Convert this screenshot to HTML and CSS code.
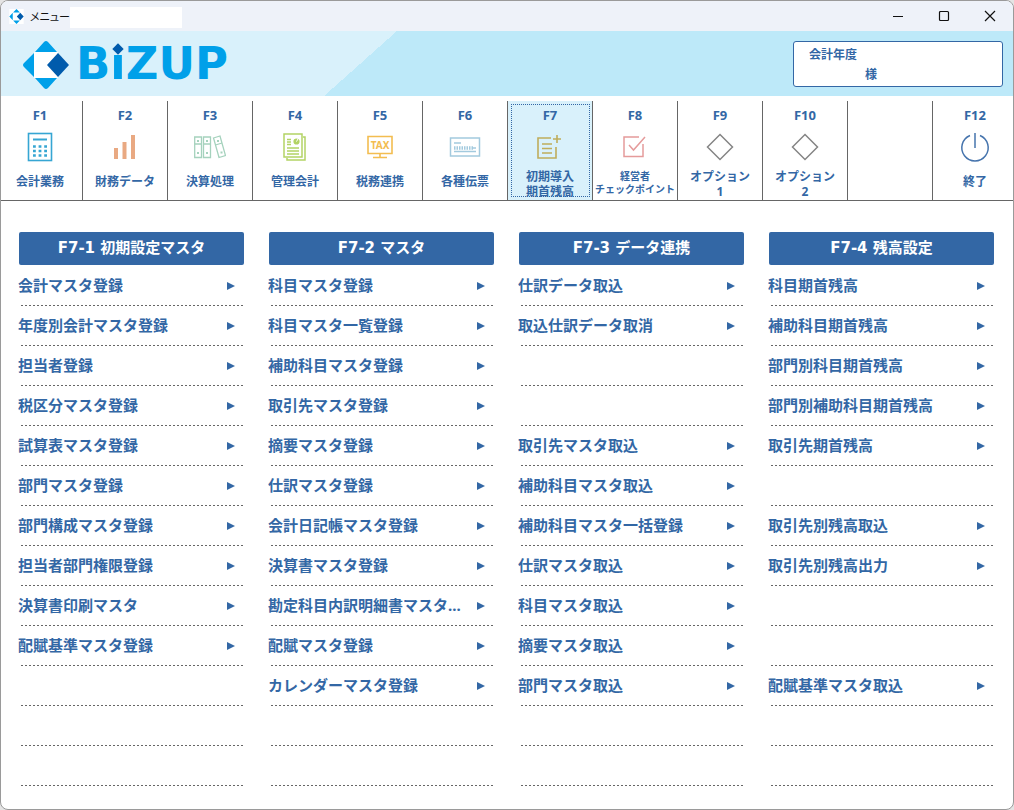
FILE: index.html
```html
<!DOCTYPE html>
<html lang="ja">
<head>
  <meta charset="UTF-8">
  <meta name="viewport" content="width=device-width, initial-scale=1.0">
  <title>メニュー</title>
  <link rel="stylesheet" href="styles.css">
</head>
<body>

<div class="window">
  <div class="titlebar">
    <svg class="title-icon" viewBox="0 0 46 48" aria-hidden="true">
      <rect width="46" height="48" fill="#fff"/>
      <path d="M23 0 34 11H12zM11 12V36L0 24zM12 37H34L23 48z" fill="#00a0e9"/>
      <path d="M35 12 46 24 35 36 24 24z" fill="#005bac"/>
    </svg>
    <span class="title-text">メニュー</span>
    <span class="title-blank"></span>
    <div class="window-buttons">
      <button aria-label="最小化"><svg viewBox="0 0 12 12"><path d="M1 6.5H11"/></svg></button>
      <button aria-label="最大化"><svg viewBox="0 0 12 12"><rect x="1.5" y="1.5" width="9" height="9" rx="1"/></svg></button>
      <button aria-label="閉じる"><svg viewBox="0 0 12 12"><path d="M1 1 11 11M11 1 1 11"/></svg></button>
    </div>
  </div>

  <header class="header">
    <svg class="logo-mark" viewBox="0 0 46 48" aria-hidden="true">
      <path d="M11 11H35V37H11z" fill="#fff"/>
      <path d="M21 1Q23-1 25 1L34 11H12zM11 12V36L1 26Q-1 24 1 22zM12 37H34L25 47Q23 49 21 47z" fill="#00a0e9"/>
      <path d="M35 12 46 24 35 36 24 24z" fill="#005bac"/>
    </svg>
    <div class="logo-text">B<span class="logo-i">i</span>ZUP</div>
    <div class="account">
      <div>会計年度</div>
      <div class="account-name">様</div>
    </div>
  </header>

  <nav class="toolbar">
    <button class="tool">
      <span class="key">F1</span>
      <svg class="icon" viewBox="0 0 32 32" stroke="#36a6d3" stroke-width="1.6">
        <rect x="4.5" y="2.5" width="23" height="27"/>
        <path d="M9 8.5H23" stroke-width="2.2"/>
        <path d="M9 15.5H23M9 20H23M9 24.5H23" stroke-width="2.6" stroke-dasharray="2.800 2.800"/>
      </svg>
      <span class="label">会計業務</span>
    </button>
    <button class="tool">
      <span class="key">F2</span>
      <svg class="icon" viewBox="0 0 32 32" stroke="#e9a982" stroke-width="4">
        <path d="M7 28V17M15.5 28V11M24 28V4"/>
      </svg>
      <span class="label">財務データ</span>
    </button>
    <button class="tool">
      <span class="key">F3</span>
      <svg class="icon" viewBox="0 0 32 32" stroke="#a5d2bd" stroke-width="1.3">
        <path d="M0.700 6H7.500V26.500H0.700zM0.700 13H7.500M9.500 6H16.500V26.500H9.500zM9.500 13H16.500M19.500 7 26 5 31.500 24.500 25 26.500zM21.500 14 28 12"/>
        <path d="M3 10H5M3 22H5M12 10H14M12 22H14M23 10H25M26.500 21.500H28.500" stroke-width="2"/>
      </svg>
      <span class="label">決算処理</span>
    </button>
    <button class="tool">
      <span class="key">F4</span>
      <svg class="icon" viewBox="0 0 32 32" stroke="#b3d364" stroke-width="1.5">
        <path d="M5 3H23V26H5zM24 6H26V29H8V27"/>
        <path d="M8 8.500H12M8 11H12M8 13.500H12M8 17H20M8 20H20M8 23H20"/>
        <circle cx="17.500" cy="10.500" r="1.700" stroke-width="2.800"/>
        <path d="M17.500 10.500 19.500 7" stroke="#fff" stroke-width="1"/>
      </svg>
      <span class="label">管理会計</span>
    </button>
    <button class="tool">
      <span class="key">F5</span>
      <svg class="icon" viewBox="0 0 32 32" stroke="#f3bd50" stroke-width="1.6">
        <path d="M4 5.500H28V22.500H4zM16 23V26M9 26.500H23"/>
        <text x="16" y="18" class="tax">TAX</text>
      </svg>
      <span class="label">税務連携</span>
    </button>
    <button class="tool">
      <span class="key">F6</span>
      <svg class="icon" viewBox="0 0 32 32" stroke="#a3cade" stroke-width="1.5">
        <rect x="1.500" y="7" width="29" height="18"/>
        <path d="M5 12H12M5 20.500H27"/>
        <path d="M5 17H24" stroke-width="3.500" stroke-dasharray="1.500 1"/>
        <path d="M24 17H27"/>
      </svg>
      <span class="label">各種伝票</span>
    </button>
    <button class="tool selected">
      <span class="key">F7</span>
      <svg class="icon" viewBox="0 0 32 32" stroke="#bfad5c" stroke-width="1.6">
        <path d="M17 7H4V27H22V16M23 4V12M19 8H27M8 13H18M8 17.500H18M8 22H18"/>
      </svg>
      <span class="label two-line">初期導入<br>期首残高</span>
    </button>
    <button class="tool">
      <span class="key">F8</span>
      <svg class="icon" viewBox="0 0 32 32" stroke="#e59b9b" stroke-width="1.5">
        <path d="M20 6H5V25.500H24V13M10 14 14.500 19 26 6"/>
      </svg>
      <span class="label small">経営者<br>チェックポイント</span>
    </button>
    <button class="tool">
      <span class="key">F9</span>
      <svg class="icon" viewBox="0 0 32 32" stroke="#858585" stroke-width="1.5">
        <path d="M16 3.500 28.500 16 16 28.500 3.500 16z"/>
      </svg>
      <span class="label two-line">オプション<br>1</span>
    </button>
    <button class="tool">
      <span class="key">F10</span>
      <svg class="icon" viewBox="0 0 32 32" stroke="#858585" stroke-width="1.5">
        <path d="M16 3.500 28.500 16 16 28.500 3.500 16z"/>
      </svg>
      <span class="label two-line">オプション<br>2</span>
    </button>
    <div class="tool"></div>
    <button class="tool">
      <span class="key">F12</span>
      <svg class="icon" viewBox="0 0 32 32" stroke="#4674ad" stroke-width="1.5">
        <path d="M11 4.500A13.200 13.200 0 1 0 21 4.500M16 2V17"/>
      </svg>
      <span class="label">終了</span>
    </button>
  </nav>

  <main class="menu">
    <section>
      <h2>F7-1 初期設定マスタ</h2>
      <ul>
        <li><button><span>会計マスタ登録</span></button></li>
        <li><button><span>年度別会計マスタ登録</span></button></li>
        <li><button><span>担当者登録</span></button></li>
        <li><button><span>税区分マスタ登録</span></button></li>
        <li><button><span>試算表マスタ登録</span></button></li>
        <li><button><span>部門マスタ登録</span></button></li>
        <li><button><span>部門構成マスタ登録</span></button></li>
        <li><button><span>担当者部門権限登録</span></button></li>
        <li><button><span>決算書印刷マスタ</span></button></li>
        <li><button><span>配賦基準マスタ登録</span></button></li>
        <li></li>
        <li></li>
        <li></li>
      </ul>
    </section>

    <section>
      <h2>F7-2 マスタ</h2>
      <ul>
        <li><button><span>科目マスタ登録</span></button></li>
        <li><button><span>科目マスタ一覧登録</span></button></li>
        <li><button><span>補助科目マスタ登録</span></button></li>
        <li><button><span>取引先マスタ登録</span></button></li>
        <li><button><span>摘要マスタ登録</span></button></li>
        <li><button><span>仕訳マスタ登録</span></button></li>
        <li><button><span>会計日記帳マスタ登録</span></button></li>
        <li><button><span>決算書マスタ登録</span></button></li>
        <li><button><span>勘定科目内訳明細書マスタ...</span></button></li>
        <li><button><span>配賦マスタ登録</span></button></li>
        <li><button><span>カレンダーマスタ登録</span></button></li>
        <li></li>
        <li></li>
      </ul>
    </section>

    <section>
      <h2>F7-3 データ連携</h2>
      <ul>
        <li><button><span>仕訳データ取込</span></button></li>
        <li><button><span>取込仕訳データ取消</span></button></li>
        <li></li>
        <li></li>
        <li><button><span>取引先マスタ取込</span></button></li>
        <li><button><span>補助科目マスタ取込</span></button></li>
        <li><button><span>補助科目マスタ一括登録</span></button></li>
        <li><button><span>仕訳マスタ取込</span></button></li>
        <li><button><span>科目マスタ取込</span></button></li>
        <li><button><span>摘要マスタ取込</span></button></li>
        <li><button><span>部門マスタ取込</span></button></li>
        <li></li>
        <li></li>
      </ul>
    </section>

    <section>
      <h2>F7-4 残高設定</h2>
      <ul>
        <li><button><span>科目期首残高</span></button></li>
        <li><button><span>補助科目期首残高</span></button></li>
        <li><button><span>部門別科目期首残高</span></button></li>
        <li><button><span>部門別補助科目期首残高</span></button></li>
        <li><button><span>取引先期首残高</span></button></li>
        <li></li>
        <li><button><span>取引先別残高取込</span></button></li>
        <li><button><span>取引先別残高出力</span></button></li>
        <li></li>
        <li></li>
        <li><button><span>配賦基準マスタ取込</span></button></li>
        <li></li>
        <li></li>
      </ul>
    </section>
  </main>
</div>

</body>
</html>
```
FILE: styles.css
```css
* {
  box-sizing: border-box;
}
body {
  margin: 0;
  background-color: #e4e4e4;
  color: #3367a5;
  font-family: "Noto Sans", "Noto Sans CJK JP", sans-serif;
}
button {
  padding: 0;
  border: none;
  background: none;
  color: inherit;
  font: inherit;
  cursor: pointer;
}
.window {
  min-height: 100vh;
  border: 1px solid #9a9a9a;
  border-radius: 8px;
  background-color: #fff;
  overflow: hidden;
}
.titlebar {
  display: flex;
  align-items: center;
  height: 30px;
  padding-left: 8px;
  background-color: #eef2f9;
}
.title-icon {
  width: 15px;
  height: 15px;
}
.title-text {
  margin-left: 6px;
  color: #111;
  font-family: "Noto Sans CJK JP", sans-serif;
  font-size: 11px;
  font-feature-settings: "palt";
  white-space: nowrap;
}
.title-blank {
  width: 112px;
  height: 21px;
  margin-top: 3px;
  background-color: #fff;
}
.window-buttons {
  display: flex;
  margin-left: auto;
}
.window-buttons button {
  display: flex;
  align-items: center;
  justify-content: center;
  width: 46px;
  height: 30px;
}
.window-buttons svg {
  width: 12px;
  height: 12px;
  fill: none;
  stroke: #111;
  stroke-width: 1.2;
}
.header {
  display: flex;
  align-items: center;
  height: 65px;
  padding: 0 10px 0 22px;
  background:
    linear-gradient(#d9f1fb, #d9f1fb) 0 0 / 323px 100% no-repeat,
    linear-gradient(to bottom right, #d9f1fb 50%, #bde9f9 50%) 323px 0 / 73px 100% no-repeat,
    #bde9f9;
}
.logo-mark {
  width: 46px;
  height: 48px;
  margin-top: 3px;
}
.logo-text {
  margin-left: 7px;
  color: #00a0e9;
  font-family: "DejaVu Sans", sans-serif;
  font-size: 45px;
  font-weight: bold;
  line-height: 48px;
}
.logo-i {
  position: relative;
  background: linear-gradient(transparent 17px, #00a0e9 17px);
  -webkit-background-clip: text;
  background-clip: text;
  color: transparent;
}
.logo-i::before {
  content: "";
  position: absolute;
  top: 8px;
  left: 4px;
  width: 8px;
  height: 8px;
  background-color: #005bac;
  transform: rotate(45deg);
}
.account {
  width: 210px;
  height: 46px;
  margin-left: auto;
  padding: 3px 15px;
  border: 1px solid #3367a5;
  border-radius: 3px;
  background-color: #fff;
  font-size: 12px;
  font-weight: bold;
  line-height: 20px;
}
.account-name {
  padding-left: 56px;
}

/* function key bar: the outer cells run under the window edge */
.toolbar {
  display: grid;
  grid-template-columns: repeat(12, 1fr);
  margin: 0 -5px 0 -3px;
  padding-top: 5px;
  border-bottom: 1px solid #666;
}
.tool {
  display: flex;
  flex-direction: column;
  align-items: center;
  height: 99px;
  padding-top: 5px;
  border-right: 1px solid #666;
  font-weight: bold;
}
.key {
  font-size: 13px;
  line-height: 18px;
}
.icon {
  width: 32px;
  height: 32px;
  margin-top: 7px;
  fill: none;
}
.tax {
  fill: #f3bd50;
  stroke: none;
  font-size: 10px;
  text-anchor: middle;
}
.label {
  margin-top: 10px;
  font-size: 12px;
  line-height: 18px;
  white-space: nowrap;
}
.two-line {
  margin-top: 6px;
  line-height: 15px;
}
.small {
  margin-top: 7px;
  font-size: 10px;
  line-height: 13px;
}
.selected {
  background-color: #d9f1fb;
  outline: 1px dotted #3367a5;
  outline-offset: -4px;
}

.menu {
  display: grid;
  grid-template-columns: repeat(4, 1fr);
  gap: 25px;
  padding: 31px 19px 22px 18px;
}
.menu section {
  min-width: 0;
}
.menu h2 {
  margin: 0 0 1px;
  border-radius: 2px;
  background-color: #3367a5;
  color: #fff;
  font-family: "DejaVu Sans", "Noto Sans CJK JP", sans-serif;
  font-size: 15px;
  line-height: 33px;
  text-align: center;
}
.menu ul {
  margin: 0;
  padding: 0;
  list-style: none;
}
.menu li {
  height: 40px;
  background: repeating-linear-gradient(90deg, #666 0 2px, transparent 2px 4px) 2px 100% / 100% 1px no-repeat;
}
.menu li button {
  display: flex;
  align-items: center;
  justify-content: space-between;
  width: 100%;
  height: 39px;
  padding-right: 9px;
  font-size: 15px;
  font-weight: bold;
  text-align: left;
}
.menu li span {
  margin-left: -1px;
  padding-bottom: 2px;
  overflow: hidden;
  text-overflow: ellipsis;
  white-space: nowrap;
}
.menu li button::after {
  content: "";
  border-left: 8px solid #3367a5;
  border-top: 4px solid transparent;
  border-bottom: 4px solid transparent;
}
```
